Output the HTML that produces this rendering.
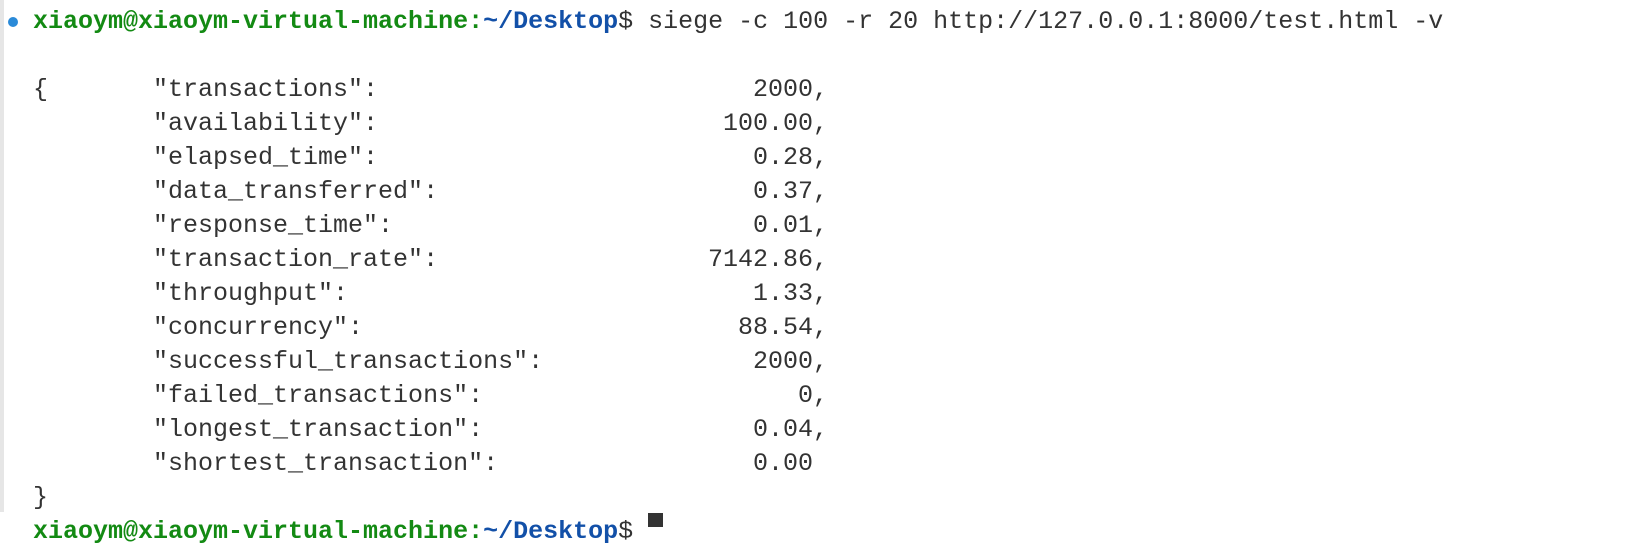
<!DOCTYPE html>
<html><head><meta charset="utf-8"><style>
html,body{margin:0;padding:0;width:1640px;height:524px;overflow:hidden;background:#fff}
.bar{position:absolute;left:0;top:0;width:4px;height:512px;background:#e6e6e6}
.dot{position:absolute;left:8px;top:17px;width:10px;height:10px;border-radius:50%;background:#2a8ad8}
pre{position:absolute;left:33px;top:5px;margin:0;font-family:"Liberation Mono",monospace;font-size:25px;line-height:34px;color:#333}
.g{color:#138a13;font-weight:bold}.b{color:#1250a8;font-weight:bold}
.row{position:absolute;left:0;width:795px;font-family:"Liberation Mono",monospace;font-size:25px;line-height:34px;color:#333;white-space:pre}
.v{position:absolute;right:0;top:0}
.cur{position:absolute;left:648px;top:513px;width:15px;height:14px;background:#333}
</style></head><body>
<div class="bar"></div><div class="dot"></div>
<pre><span class="g">xiaoym@xiaoym-virtual-machine:</span><span class="b">~/Desktop</span>$ siege -c 100 -r 20 http://127.0.0.1:8000/test.html -v

{       "transactions":
        "availability":
        "elapsed_time":
        "data_transferred":
        "response_time":
        "transaction_rate":
        "throughput":
        "concurrency":
        "successful_transactions":
        "failed_transactions":
        "longest_transaction":
        "shortest_transaction":
}
<span class="g">xiaoym@xiaoym-virtual-machine:</span><span class="b">~/Desktop</span>$ </pre>
<div style="position:absolute;left:33px;top:5px;width:795px;height:500px">
<div class="row" style="top:68px"><span class="v">2000,</span></div>
<div class="row" style="top:102px"><span class="v">100.00,</span></div>
<div class="row" style="top:136px"><span class="v">0.28,</span></div>
<div class="row" style="top:170px"><span class="v">0.37,</span></div>
<div class="row" style="top:204px"><span class="v">0.01,</span></div>
<div class="row" style="top:238px"><span class="v">7142.86,</span></div>
<div class="row" style="top:272px"><span class="v">1.33,</span></div>
<div class="row" style="top:306px"><span class="v">88.54,</span></div>
<div class="row" style="top:340px"><span class="v">2000,</span></div>
<div class="row" style="top:374px"><span class="v">0,</span></div>
<div class="row" style="top:408px"><span class="v">0.04,</span></div>
<div class="row" style="top:442px"><span class="v">0.00 </span></div>
</div>
<div class="cur"></div>
</body></html>
